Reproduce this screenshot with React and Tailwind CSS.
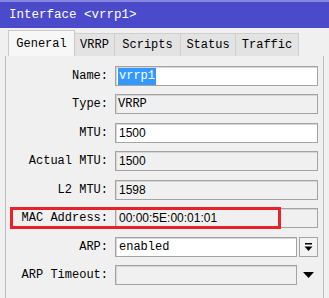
import React from 'react'

const mono = { fontFamily: '"Liberation Mono", "DejaVu Sans Mono", monospace' }
const sans = { fontFamily: '"Liberation Sans", Arial, sans-serif' }

const tabs = [
  { label: 'General', w: 'w-[67px]', active: true },
  { label: 'VRRP', w: 'w-[40px]' },
  { label: 'Scripts', w: 'w-[66px]' },
  { label: 'Status', w: 'w-[55px]' },
  { label: 'Traffic', w: 'w-[63px]' },
]

function Field({ children, editable, className = '' }) {
  return (
    <div
      className={`h-[20px] flex items-center border border-[#a3a3a3] shadow-[inset_1px_1px_0_#d6d6d6] ${editable ? 'bg-white' : 'bg-[#f0f0f0]'} ${className}`}
    >
      {children}
    </div>
  )
}

function Row({ label, children, mt = 'mt-[8px]' }) {
  return (
    <div className={`relative flex items-center h-[20px] ${mt}`}>
      <div className="w-[103px] text-right text-[12px] text-black pr-[1px] whitespace-nowrap" style={mono}>
        {label}
      </div>
      <div className="ml-[6px] flex items-center">{children}</div>
    </div>
  )
}

export default function App() {
  return (
    <div className="w-[329px] h-[298px] bg-[#f0f0f0] overflow-hidden flex flex-col">
      {/* Title bar */}
      <div className="h-[28px] bg-[#4a4acb] border-t-[2px] border-[#8686e0] flex items-center pl-[9px]">
        <span className="text-white text-[12.5px] leading-none" style={mono}>
          Interface &lt;vrrp1&gt;
        </span>
      </div>

      {/* Tabs */}
      <div className="h-[28px] flex items-end pl-[8px]">
        {tabs.map((t) =>
          t.active ? (
            <div
              key={t.label}
              className={`${t.w} h-[26px] bg-[#f7f7f7] border border-b-0 border-[#c8c8c8] flex items-center justify-center text-[12px] text-black`}
              style={mono}
            >
              {t.label}
            </div>
          ) : (
            <div
              key={t.label}
              className={`${t.w} h-[23px] bg-[#e3e3e3] border-r border-t border-[#cfcfcf] flex items-center justify-center text-[12px] text-black`}
              style={mono}
            >
              {t.label}
            </div>
          )
        )}
      </div>

      {/* Panel */}
      <div className="flex-1 ml-[5px] w-[319px] border-l border-r border-[#bdbdbd] pt-[10px]">
        <Row label="Name:" mt="mt-0">
          <Field editable className="w-[203px] pl-[2px]">
            <span className="bg-[#3399ff] text-white text-[12px] h-[17px] flex items-center px-[1px]" style={mono}>
              vrrp1
            </span>
          </Field>
        </Row>
        <Row label="Type:">
          <Field className="w-[203px] pl-[2px]">
            <span className="text-[12px] text-black" style={mono}>VRRP</span>
          </Field>
        </Row>
        <Row label="MTU:" mt="mt-[9px]">
          <Field editable className="w-[203px] pl-[3px]">
            <span className="text-[12px] text-black" style={sans}>1500</span>
          </Field>
        </Row>
        <Row label="Actual MTU:">
          <Field className="w-[203px] pl-[3px]">
            <span className="text-[12px] text-black" style={sans}>1500</span>
          </Field>
        </Row>
        <Row label="L2 MTU:" mt="mt-[9px]">
          <Field className="w-[203px] pl-[3px]">
            <span className="text-[12px] text-black" style={sans}>1598</span>
          </Field>
        </Row>
        <Row label="MAC Address:">
          <Field className="w-[203px] pl-[3px]">
            <span className="text-[12px] text-black" style={sans}>00:00:5E:00:01:01</span>
          </Field>
          {/* annotation box */}
          <div className="absolute left-[4px] top-[-1px] w-[271px] h-[22px] border-[3px] border-[#e8212b] pointer-events-none" />
        </Row>
        <Row label="ARP:" mt="mt-[9px]">
          <Field editable className="w-[182px] pl-[3px]">
            <span className="text-[12px] text-black" style={mono}>enabled</span>
          </Field>
          <div className="ml-[2px] w-[19px] h-[20px] border border-[#a3a3a3] bg-[#f3f3f3] flex items-center justify-center">
            <svg width="9" height="9" viewBox="0 0 9 9">
              <rect x="1" y="0" width="7" height="1.5" fill="#000" />
              <path d="M0.5 3.5 H8.5 L4.5 8 Z" fill="#000" />
            </svg>
          </div>
        </Row>
        <Row label="ARP Timeout:">
          <Field className="w-[182px]" />
          <div className="ml-[2px] w-[19px] h-[20px] flex items-center justify-center">
            <svg width="11" height="7" viewBox="0 0 11 7">
              <path d="M0 0 H11 L5.5 6 Z" fill="#000" />
            </svg>
          </div>
        </Row>
      </div>
    </div>
  )
}
